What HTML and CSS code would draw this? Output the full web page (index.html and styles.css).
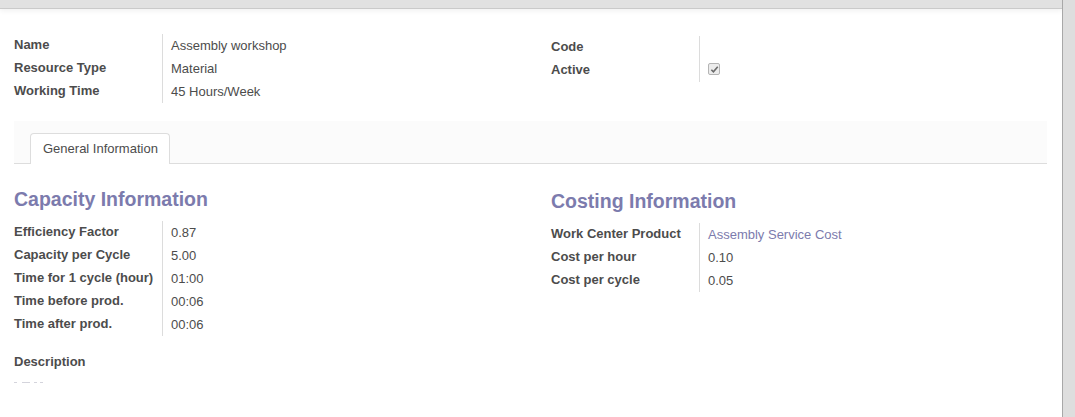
FILE: index.html
```html
<!DOCTYPE html>
<html>
<head>
<meta charset="utf-8">
<link rel="stylesheet" href="styles.css">
</head>
<body>
<div class="frame">
  <div class="main">
    <div class="topbar"></div>
    <div class="sheet">
      <div class="cols top-cols">
        <div class="group">
          <div class="lbl">Name</div><div class="val">Assembly workshop</div>
          <div class="lbl">Resource Type</div><div class="val">Material</div>
          <div class="lbl">Working Time</div><div class="val">45 Hours/Week</div>
        </div>
        <div class="group shift">
          <div class="lbl">Code</div><div class="val"></div>
          <div class="lbl">Active</div><div class="val"><span class="check"><svg viewBox="0 0 10 10" width="9" height="9"><path d="M1.5 5.3 L3.8 7.6 L8.6 2" fill="none" stroke="#6a6a6a" stroke-width="1.8"/></svg></span></div>
        </div>
      </div>
      <div class="notebook">
        <div class="tabs"><div class="tab">General Information</div></div>
        <div class="page">
          <div class="cols">
            <div class="col">
              <div class="sep">Capacity Information</div>
              <div class="group">
                <div class="lbl">Efficiency Factor</div><div class="val">0.87</div>
                <div class="lbl">Capacity per Cycle</div><div class="val">5.00</div>
                <div class="lbl">Time for 1 cycle (hour)</div><div class="val">01:00</div>
                <div class="lbl">Time before prod.</div><div class="val">00:06</div>
                <div class="lbl">Time after prod.</div><div class="val">00:06</div>
              </div>
            </div>
            <div class="col shift">
              <div class="sep">Costing Information</div>
              <div class="group">
                <div class="lbl">Work Center Product</div><div class="val link">Assembly Service Cost</div>
                <div class="lbl">Cost per hour</div><div class="val">0.10</div>
                <div class="lbl">Cost per cycle</div><div class="val">0.05</div>
              </div>
            </div>
          </div>
          <div class="desc-label">Description</div>
          <div class="desc-marks"><i class="m1"></i><i class="m2"></i><i class="m3"></i><i class="m4"></i></div>
        </div>
      </div>
    </div>
  </div>
  <div class="side"></div>
</div>
</body>
</html>
```
FILE: styles.css
```css
html, body {
  margin: 0;
  padding: 0;
  background: #fff;
}
body {
  font-family: "Liberation Sans", Arial, sans-serif;
  font-size: 13px;
  color: #4c4c4c;
  height: 417px;
  overflow: hidden;
}
.frame {
  display: flex;
  height: 417px;
}
.main {
  flex: 1;
  min-width: 0;
}
.side {
  width: 12px;
  background: #dedede;
  border-left: 1px solid #a8a8a8;
}
.topbar {
  height: 8px;
  background: #e1e1e1;
  border-bottom: 1px solid #cacaca;
  box-shadow: 0 2px 5px rgba(0, 0, 0, 0.06);
}
.sheet {
  padding: 25px 15px 0 14px;
}
.cols {
  display: grid;
  grid-template-columns: 537px 1fr;
}
.shift {
  margin-top: 2px;
}
.group {
  display: grid;
  grid-template-columns: 149px 1fr;
  grid-auto-rows: 23px;
}
.lbl {
  font-weight: bold;
  line-height: 21px;
  border-right: 1px solid #dcdcdc;
  white-space: nowrap;
}
.val {
  line-height: 21px;
  padding-left: 8px;
  padding-top: 1px;
}
.link {
  color: #7c7bad;
}
.check {
  display: inline-block;
  box-sizing: border-box;
  width: 12px;
  height: 12px;
  margin-top: 3px;
  border: 1px solid #b4b4b4;
  border-radius: 2px;
  background: #ececec;
  vertical-align: top;
  line-height: 0;
}
.check svg {
  margin: 1px 0 0 1px;
}
.notebook {
  margin-top: 18px;
  background: #fff;
}
.tabs {
  padding: 12px 0 0 16px;
  background: #fbfbfb;
  border-bottom: 1px solid #dddddd;
  display: flex;
}
.tab {
  box-sizing: border-box;
  height: 31px;
  margin-bottom: -1px;
  padding: 0 11px 0 12px;
  line-height: 29px;
  border: 1px solid #dddddd;
  border-bottom: none;
  border-radius: 4px 4px 0 0;
  background: #fff;
  color: #4c4c4c;
}
.sep {
  margin: 23px 0 10px;
  font-size: 19.5px;
  line-height: 24px;
  font-weight: bold;
  color: #7c7bad;
}
.desc-label {
  margin-top: 15px;
  font-weight: bold;
  line-height: 21px;
}
.desc-marks {
  display: flex;
  margin-top: 10px;
  height: 2px;
}
.desc-marks i {
  display: block;
  height: 1px;
  background: #d4d4dc;
}
.desc-marks .m1 { width: 3px; }
.desc-marks .m2 { width: 8px; margin-left: 5px; }
.desc-marks .m3 { width: 3px; margin-left: 4px; }
.desc-marks .m4 { width: 3px; margin-left: 3px; }
.page {
  padding-bottom: 40px;
}
```
